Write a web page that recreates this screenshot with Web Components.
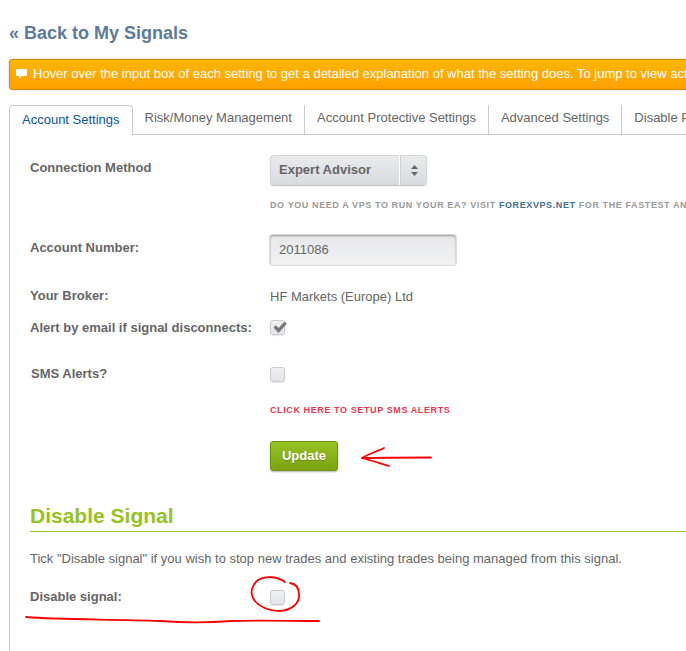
<!DOCTYPE html>
<html>
<head>
<meta charset="utf-8">
<title>Signal settings</title>
<style>
    html, body { margin: 0; padding: 0; background: #fff; }
    body { width: 686px; height: 651px; overflow: hidden; position: relative; font-family: "Liberation Sans", Arial, sans-serif; }
</style>
</head>
<body>
<signal-page>
    <back-link slot="back">« Back to My Signals</back-link>
    <notice-bar slot="notice">Hover over the input box of each setting to get a detailed explanation of what the setting does. To jump to view actual settings click here and scroll down the page</notice-bar>
    <tab-bar slot="tabs">
        <tab-item active>Account Settings</tab-item>
        <tab-item>Risk/Money Management</tab-item>
        <tab-item>Account Protective Settings</tab-item>
        <tab-item>Advanced Settings</tab-item>
        <tab-item>Disable Position Sizing</tab-item>
    </tab-bar>

    <form-row label="Connection Method" style="height:80px">
        <select-box>Expert Advisor</select-box>
        <small-note style="margin-top:14px">Do you need a VPS to run your EA? Visit <b>ForexVPS.net</b> for the fastest and most reliable service available today</small-note>
    </form-row>
    <form-row label="Account Number:" style="height:48px">
        <text-box>2011086</text-box>
    </form-row>
    <form-row label="Your Broker:" style="height:32px"><span style="display:block;padding-top:6px;font-size:13px;line-height:16px">HF Markets (Europe) Ltd</span></form-row>
    <form-row label="Alert by email if signal disconnects:" style="height:46px"><check-box checked></check-box></form-row>
    <form-row label="SMS Alerts?" indent style="height:80px">
        <check-box></check-box>
        <small-note tone="red" style="margin-top:22px">Click here to setup SMS alerts</small-note>
    </form-row>
    <form-row style="height:63px"><green-button>Update</green-button></form-row>

    <section-title>Disable Signal</section-title>
    <p-text>Tick "Disable signal" if you wish to stop new trades and existing trades being managed from this signal.</p-text>
    <form-row label="Disable signal:" style="height:40px"><check-box></check-box></form-row>
</signal-page>
<red-marks></red-marks>

<script>
class SignalPage extends HTMLElement {
    constructor() {
        super();
        this.attachShadow({ mode: "open" });
        this.shadowRoot.innerHTML = `
            <style>
                :host { display: block; width: 900px; padding: 0 0 0 9px; color: #666; font-size: 13px; }
                .back { padding-top: 23px; height: 36px; }
                .panel { border-left: 1px solid #ccc; padding: 20px 0 0 20px; height: 520px; }
            </style>
            <div class="back"><slot name="back"></slot></div>
            <slot name="notice"></slot>
            <slot name="tabs"></slot>
            <div class="panel"><slot></slot></div>
        `;
    }
}

class BackLink extends HTMLElement {
    constructor() {
        super();
        this.attachShadow({ mode: "open" });
        this.shadowRoot.innerHTML = `
            <style>
                :host { display: block; font: bold 18px/20px "Liberation Sans", Arial, sans-serif; color: #5d7b98; }
            </style>
            <slot></slot>
        `;
    }
}

class NoticeBar extends HTMLElement {
    constructor() {
        super();
        this.attachShadow({ mode: "open" });
        this.shadowRoot.innerHTML = `
            <style>
                :host { display: block; box-sizing: border-box; height: 31px; white-space: nowrap; overflow: hidden;
                    border: 1px solid #d18e00; border-radius: 3px; background: linear-gradient(#ffb700, #ffa000);
                    box-shadow: 0 0 2px rgba(0,0,0,.25); color: #fff; font-size: 13px; line-height: 27px; padding-left: 6px; margin-bottom: 15px; }
                .row { display: flex; align-items: center; gap: 6px; }
                svg { flex: none; margin-top: 1px; }
            </style>
            <div class="row">
                <svg width="11" height="10" viewBox="0 0 11 10"><path fill="#fff" d="M1 0h9a1 1 0 0 1 1 1v5a1 1 0 0 1-1 1H6L3 10V7H1a1 1 0 0 1-1-1V1a1 1 0 0 1 1-1z"/></svg>
                <span><slot></slot></span>
            </div>
        `;
    }
}

class TabBar extends HTMLElement {
    constructor() {
        super();
        this.attachShadow({ mode: "open" });
        this.shadowRoot.innerHTML = `
            <style>
                :host { display: flex; height: 30px; box-sizing: border-box; border-bottom: 1px solid #ccc; }
            </style>
            <slot></slot>
        `;
    }
}

class TabItem extends HTMLElement {
    constructor() {
        super();
        this.attachShadow({ mode: "open" });
        this.shadowRoot.innerHTML = `
            <style>
                :host { display: block; box-sizing: border-box; height: 29px; padding: 0 12px; white-space: nowrap;
                    font-size: 13px; line-height: 25px; color: #666; border-right: 1px solid #ccc; }
                :host([active]) { height: 30px; padding: 0 12px; line-height: 28px; color: #0b559f; background: #fff;
                    border: 1px solid #ccc; border-bottom: none; border-radius: 4px 4px 0 0; }
            </style>
            <slot></slot>
        `;
    }
}

class FormRow extends HTMLElement {
    constructor() {
        super();
        this.attachShadow({ mode: "open" });
        const label = this.getAttribute("label") || "";
        this.shadowRoot.innerHTML = `
            <style>
                :host { display: flex; font-size: 13px; color: #666; }
                .label { flex: none; width: 240px; box-sizing: border-box; font-weight: bold; font-size: 13px; line-height: 16px; padding-top: 5px; color: #666; white-space: nowrap; }
                :host([indent]) .label { padding-left: 1px; }
                .value { flex: 1; min-width: 0; }
            </style>
            <div class="label"><span id="t"></span></div>
            <div class="value"><slot></slot></div>
        `;
        this.shadowRoot.getElementById("t").textContent = label;
    }
}

class SelectBox extends HTMLElement {
    constructor() {
        super();
        this.attachShadow({ mode: "open" });
        this.shadowRoot.innerHTML = `
            <style>
                :host { display: flex; box-sizing: border-box; width: 157px; height: 30px; border-radius: 4px;
                    background: linear-gradient(#e9ebed, #d9dbde); box-shadow: 0 1px 1px rgba(0,0,0,.25), inset 0 0 0 1px #d5d7da;
                    color: #666; font: bold 13px/29px "Liberation Sans", Arial, sans-serif; }
                .text { width: 130px; padding-left: 9px; box-sizing: border-box; border-right: 1px solid #fff; box-shadow: 1px 0 0 #cfd1d4; }
                .arrows { flex: 1; display: flex; align-items: center; justify-content: center; padding-left: 1px; }
            </style>
            <div class="text"><slot></slot></div>
            <div class="arrows">
                <svg width="7" height="11" viewBox="0 0 7 11"><path fill="#666" d="M3.5 0 7 4H0zM0 7h7l-3.5 4z"/></svg>
            </div>
        `;
    }
}

class TextBox extends HTMLElement {
    constructor() {
        super();
        this.attachShadow({ mode: "open" });
        this.shadowRoot.innerHTML = `
            <style>
                :host { display: block; box-sizing: border-box; width: 186px; height: 30px; border-radius: 3px; padding-left: 9px;
                    background: linear-gradient(#e6e7e9, #f3f3f4); box-shadow: inset 0 1px 2px rgba(0,0,0,.35), 0 0 0 1px #dcdcdc;
                    color: #666; font-size: 13px; line-height: 29px; }
            </style>
            <slot></slot>
        `;
    }
}

class CheckBox extends HTMLElement {
    constructor() {
        super();
        this.attachShadow({ mode: "open" });
        const mark = this.hasAttribute("checked")
            ? `<svg width="16" height="13" viewBox="0 0 16 14"><path fill="#777" d="M1 7 3.5 4.6 6.4 7.6 13 0.6 15.4 3 6.4 13z"/></svg>`
            : "";
        this.shadowRoot.innerHTML = `
            <style>
                :host { display: block; position: relative; box-sizing: border-box; width: 15px; height: 15px; margin-top: 6px; border: 1px solid #ccc; border-radius: 3px;
                    background: linear-gradient(#f0f0f1, #e4e5e7); box-shadow: 0 1px 1px rgba(0,0,0,.1); }
                :host([checked]) { margin-top: 5px; }
                svg { position: absolute; left: 1px; top: 0; }
            </style>
            ${mark}
        `;
    }
}

class SmallNote extends HTMLElement {
    constructor() {
        super();
        this.attachShadow({ mode: "open" });
        this.shadowRoot.innerHTML = `
            <style>
                :host { display: block; white-space: nowrap; font: bold 9px/12px "Liberation Sans", Arial, sans-serif; letter-spacing: .6px; text-transform: uppercase; color: #999; }
                :host([tone="red"]) { color: #e8384f; }
                ::slotted(b) { color: #3f6f91; }
            </style>
            <slot></slot>
        `;
    }
}

class GreenButton extends HTMLElement {
    constructor() {
        super();
        this.attachShadow({ mode: "open" });
        this.shadowRoot.innerHTML = `
            <style>
                :host { display: block; box-sizing: border-box; width: 68px; height: 30px; border: 1px solid #6f9410; border-radius: 3px; text-align: center;
                    background: linear-gradient(#97c223, #7ba313); box-shadow: 0 1px 2px rgba(0,0,0,.3);
                    color: #fff; font: bold 13px/27px "Liberation Sans", Arial, sans-serif; text-shadow: 0 1px 1px rgba(0,0,0,.25); }
            </style>
            <slot></slot>
        `;
    }
}

class SectionTitle extends HTMLElement {
    constructor() {
        super();
        this.attachShadow({ mode: "open" });
        this.shadowRoot.innerHTML = `
            <style>
                :host { display: block; box-sizing: border-box; height: 28px; border-bottom: 1px solid #97c223;
                    color: #97c223; font: bold 21px/24px "Liberation Sans", Arial, sans-serif; }
            </style>
            <slot></slot>
        `;
    }
}

class PText extends HTMLElement {
    constructor() {
        super();
        this.attachShadow({ mode: "open" });
        this.shadowRoot.innerHTML = `
            <style>
                :host { display: block; height: 33px; padding-top: 19px; color: #666; font-size: 13px; line-height: 16px; }
            </style>
            <slot></slot>
        `;
    }
}

class RedMarks extends HTMLElement {
    constructor() {
        super();
        this.attachShadow({ mode: "open" });
        this.shadowRoot.innerHTML = `
            <style>
                :host { position: absolute; left: 0; top: 0; width: 686px; height: 651px; pointer-events: none; }
                path { fill: none; stroke: #f00; stroke-width: 1.8; stroke-linecap: round; stroke-linejoin: round; }
            </style>
            <svg width="686" height="651" viewBox="0 0 686 651">
                <path d="M431 457.5 C405 457.5 385 457.5 362 458 M362 458 C368 454 378 451 384 448 M362 458 C370 460 382 464 389 466"/>
                <path d="M285 582 C278 577 266 575 258 580 C252 585 250 592 253 598 C257 606 268 611 280 611 C292 610 300 603 299 594 C299 587 296 584 290 583"/>
                <path d="M26 617 C60 620 110 619 160 621 C185 623 205 623 232 621 C260 620 290 621 319 621"/>
            </svg>
        `;
    }
}

customElements.define("signal-page", SignalPage);
customElements.define("back-link", BackLink);
customElements.define("notice-bar", NoticeBar);
customElements.define("tab-bar", TabBar);
customElements.define("tab-item", TabItem);
customElements.define("form-row", FormRow);
customElements.define("select-box", SelectBox);
customElements.define("text-box", TextBox);
customElements.define("check-box", CheckBox);
customElements.define("small-note", SmallNote);
customElements.define("green-button", GreenButton);
customElements.define("section-title", SectionTitle);
customElements.define("p-text", PText);
customElements.define("red-marks", RedMarks);
</script>
</body>
</html>
